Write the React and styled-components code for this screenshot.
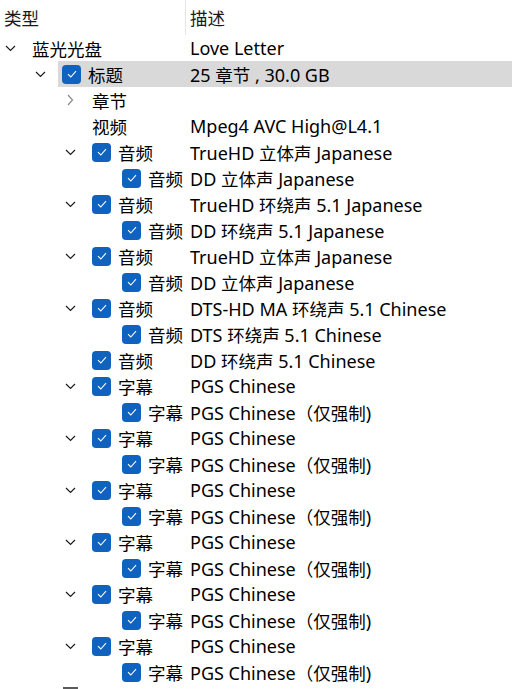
import React from "react";
import styled, { createGlobalStyle } from "styled-components";

const GlobalStyle = createGlobalStyle`
  html, body {
    margin: 0;
    padding: 0;
    background: #ffffff;
  }
  body {
    font-family: "Noto Sans", "Noto Sans CJK SC", sans-serif;
    font-size: 18px;
    color: #000000;
    overflow: hidden;
  }
`;

const rows = [
    { level: 0, open: true, name: "蓝光光盘", desc: "Love Letter" },
    { level: 1, open: true, check: true, name: "标题", desc: "25 章节 , 30.0 GB", selected: true },
    { level: 2, open: false, name: "章节", desc: "" },
    { level: 2, name: "视频", desc: "Mpeg4 AVC High@L4.1" },
    { level: 2, open: true, check: true, name: "音频", desc: "TrueHD 立体声 Japanese" },
    { level: 3, check: true, name: "音频", desc: "DD 立体声 Japanese" },
    { level: 2, open: true, check: true, name: "音频", desc: "TrueHD 环绕声 5.1 Japanese" },
    { level: 3, check: true, name: "音频", desc: "DD 环绕声 5.1 Japanese" },
    { level: 2, open: true, check: true, name: "音频", desc: "TrueHD 立体声 Japanese" },
    { level: 3, check: true, name: "音频", desc: "DD 立体声 Japanese" },
    { level: 2, open: true, check: true, name: "音频", desc: "DTS-HD MA 环绕声 5.1 Chinese" },
    { level: 3, check: true, name: "音频", desc: "DTS 环绕声 5.1 Chinese" },
    { level: 2, check: true, name: "音频", desc: "DD 环绕声 5.1 Chinese" },
    { level: 2, open: true, check: true, name: "字幕", desc: "PGS Chinese" },
    { level: 3, check: true, name: "字幕", desc: "PGS Chinese（仅强制)" },
    { level: 2, open: true, check: true, name: "字幕", desc: "PGS Chinese" },
    { level: 3, check: true, name: "字幕", desc: "PGS Chinese（仅强制)" },
    { level: 2, open: true, check: true, name: "字幕", desc: "PGS Chinese" },
    { level: 3, check: true, name: "字幕", desc: "PGS Chinese（仅强制)" },
    { level: 2, open: true, check: true, name: "字幕", desc: "PGS Chinese" },
    { level: 3, check: true, name: "字幕", desc: "PGS Chinese（仅强制)" },
    { level: 2, open: true, check: true, name: "字幕", desc: "PGS Chinese" },
    { level: 3, check: true, name: "字幕", desc: "PGS Chinese（仅强制)" },
    { level: 2, open: true, check: true, name: "字幕", desc: "PGS Chinese" },
    { level: 3, check: true, name: "字幕", desc: "PGS Chinese（仅强制)" },
];

// tree column is 186px wide, each level indents 30px
const NAME_COL = 186;
const INDENT = 30;
const EXPANDER = 28;

// han characters run a little smaller than the latin text, like the system composite font
function MixedText({ children }) {
    const parts = String(children).split(/([\u3000-\u9fff\uff00-\uffef]+)/);
    return (
        <>
            {parts.map((part, i) => (i % 2 === 1 ? <Han key={i}>{part}</Han> : part))}
        </>
    );
}

function Chevron({ open }) {
    return open ? (
        <svg width="11" height="7" viewBox="0 0 11 7">
            <path d="M1 1 L5.5 5.5 L10 1" fill="none" stroke="#1b1b1b" strokeWidth="1.2" />
        </svg>
    ) : (
        <svg width="7" height="12" viewBox="0 0 7 12">
            <path d="M1 1 L5.5 6 L1 11" fill="none" stroke="#8a8a8a" strokeWidth="1.2" />
        </svg>
    );
}

function CheckMark() {
    return (
        <svg width="10" height="8" viewBox="0 0 10 8">
            <path d="M1 4.2 L3.8 7 L9 1.2" fill="none" stroke="#ffffff" strokeWidth="1.1" />
        </svg>
    );
}

export default function App() {
    return (
        <>
            <GlobalStyle />
            <TreeList>
                <Header>
                    <HeaderCell><MixedText>类型</MixedText></HeaderCell>
                    <HeaderCell $divider><MixedText>描述</MixedText></HeaderCell>
                </Header>
                {rows.map((row, i) => (
                    <Row key={i}>
                        <Expander $level={row.level}>
                            <ChevronSlot>{row.open !== undefined && <Chevron open={row.open} />}</ChevronSlot>
                        </Expander>
                        <Item $selected={row.selected}>
                            <NameCell $level={row.level}>
                                {row.check && (
                                    <CheckBox>
                                        <CheckMark />
                                    </CheckBox>
                                )}
                                <span><MixedText>{row.name}</MixedText></span>
                            </NameCell>
                            <DescCell><MixedText>{row.desc}</MixedText></DescCell>
                        </Item>
                    </Row>
                ))}
                <Row>
                    <Expander $level={1} />
                    <Item>
                        <NameCell $level={1}>
                            <CutMark />
                        </NameCell>
                    </Item>
                </Row>
            </TreeList>
        </>
    );
}

// styling of components
const TreeList = styled.div`
width: 512px;
height: 689px;
overflow: hidden;
background: #ffffff;
`;

const Han = styled.span`
font-family: "Noto Sans CJK SC", sans-serif;
font-size: 17.5px;
`;

const Header = styled.div`
height: 35px;
display: grid;
grid-template-columns: ${NAME_COL - 1}px 1fr;
align-items: stretch;
`;

const HeaderCell = styled.div`
display: flex;
align-items: center;
padding-left: 4px;
padding-bottom: 1px;
border-left: ${p => (p.$divider ? "1px solid #e5e5e5" : "none")};
color: #1a1a1a;
`;

const Row = styled.div`
height: 26px;
display: flex;
align-items: stretch;
`;

const Expander = styled.div`
flex: none;
width: ${p => p.$level * INDENT + EXPANDER}px;
display: flex;
justify-content: flex-end;
align-items: center;
`;

const ChevronSlot = styled.div`
width: 11px;
margin-right: 12px;
display: flex;
justify-content: center;
align-items: center;
`;

const Item = styled.div`
flex: 1;
display: flex;
align-items: center;
background: ${p => (p.$selected ? "#d9d9d9" : "transparent")};
white-space: nowrap;
`;

const NameCell = styled.div`
flex: none;
box-sizing: border-box;
width: ${p => NAME_COL - p.$level * INDENT - EXPANDER}px;
padding-left: 4px;
display: flex;
align-items: center;
gap: 7px;
height: 100%;
`;

const DescCell = styled.div`
padding-left: 4px;
`;

const CheckBox = styled.div`
flex: none;
width: 19px;
height: 19px;
border-radius: 4px;
background: #0f62be;
display: flex;
align-items: center;
justify-content: center;
`;

const CutMark = styled.div`
align-self: flex-start;
margin-top: 2px;
margin-left: 1px;
width: 15px;
height: 2px;
background: #5a5a5a;
`;
